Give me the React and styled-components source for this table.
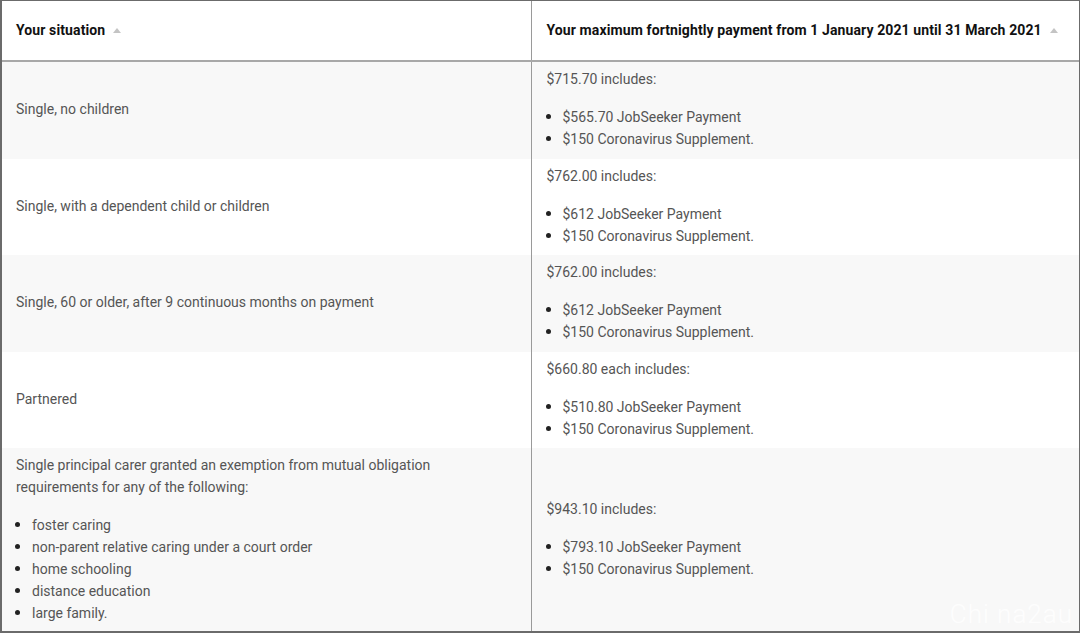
import React from 'react';
import styled, { createGlobalStyle } from 'styled-components';

const GlobalStyle = createGlobalStyle`
  html, body {
    margin: 0;
    padding: 0;
    background: #fff;
  }
  body {
    font-family: Roboto, "Liberation Sans", Arial, sans-serif;
    -webkit-font-smoothing: antialiased;
  }
`;

const rows = [
  {
    situation: 'Single, no children',
    total: '$715.70 includes:',
    items: ['$565.70 JobSeeker Payment', '$150 Coronavirus Supplement.'],
  },
  {
    situation: 'Single, with a dependent child or children',
    total: '$762.00 includes:',
    items: ['$612 JobSeeker Payment', '$150 Coronavirus Supplement.'],
  },
  {
    situation: 'Single, 60 or older, after 9 continuous months on payment',
    total: '$762.00 includes:',
    items: ['$612 JobSeeker Payment', '$150 Coronavirus Supplement.'],
  },
  {
    situation: 'Partnered',
    total: '$660.80 each includes:',
    items: ['$510.80 JobSeeker Payment', '$150 Coronavirus Supplement.'],
  },
  {
    situation:
      'Single principal carer granted an exemption from mutual obligation requirements for any of the following:',
    reasons: [
      'foster caring',
      'non-parent relative caring under a court order',
      'home schooling',
      'distance education',
      'large family.',
    ],
    total: '$943.10 includes:',
    items: ['$793.10 JobSeeker Payment', '$150 Coronavirus Supplement.'],
  },
];

export default function App() {
  return (
    <>
      <GlobalStyle />
      <Frame>
        <Table>
          <colgroup>
            <col style={{ width: 529 }} />
            <col />
          </colgroup>
          <thead>
            <tr>
              <HeadCell>
                Your situation
                <SortArrow />
              </HeadCell>
              <HeadCell>
                Your maximum fortnightly payment from 1 January 2021 until 31 March 2021
                <SortArrow />
              </HeadCell>
            </tr>
          </thead>
          <tbody>
            {rows.map((row, i) => (
              <Row key={i} striped={i % 2 === 0}>
                <Cell>
                  {row.reasons ? (
                    <>
                      <Para $wrap>{row.situation}</Para>
                      <List>
                        {row.reasons.map((r) => (
                          <li key={r}>{r}</li>
                        ))}
                      </List>
                    </>
                  ) : (
                    row.situation
                  )}
                </Cell>
                <Cell>
                  <Para>{row.total}</Para>
                  <List>
                    {row.items.map((it) => (
                      <li key={it}>{it}</li>
                    ))}
                  </List>
                </Cell>
              </Row>
            ))}
          </tbody>
        </Table>
        <Watermark>Chi na2au</Watermark>
      </Frame>
    </>
  );
}

const Frame = styled.div`
  position: relative;
  width: 1080px;
  height: 633px;
  box-sizing: border-box;
  border: 1px solid #6b6b6b;
  border-left-width: 2px;
  border-bottom-width: 2px;
  overflow: hidden;
`;

const Table = styled.table`
  width: 100%;
  border-collapse: collapse;
  table-layout: fixed;
  font-size: 14px;
  line-height: 22px;
  color: #555;
`;

const HeadCell = styled.th`
  height: 58px;
  padding: 0 15px 1px 14px;
  text-align: left;
  font-weight: 700;
  letter-spacing: 0.11px;
  color: #111;
  border-bottom: 2px solid #a8a8a8;
  vertical-align: middle;
  white-space: nowrap;

  & + & {
    border-left: 1px solid #9a9a9a;
    padding-left: 15px;
  }
`;

const SortArrow = styled.span`
  display: inline-block;
  margin-left: 8px;
  width: 0;
  height: 0;
  border-left: 4.5px solid transparent;
  border-right: 4.5px solid transparent;
  border-bottom: 5px solid #c4c4c4;
  vertical-align: 2px;
`;

const Row = styled.tr.withConfig({ shouldForwardProp: (p) => p !== 'striped' })`
  background: ${({ striped }) => (striped ? '#f8f8f8' : '#fff')};
`;

const Cell = styled.td`
  height: 82.5px;
  padding: 6px 16px 8px 14px;
  vertical-align: middle;
  font-weight: 400;

  & + & {
    border-left: 1px solid #9a9a9a;
    padding-left: 15px;
  }
`;

const Para = styled.p`
  margin: 0;
  max-width: ${({ $wrap }) => ($wrap ? '420px' : 'none')};
`;

const List = styled.ul`
  margin: 16px 0 0;
  padding-left: 16px;

  li::marker {
    font-size: 16px;
    color: #222;
  }
`;

const Watermark = styled.div`
  position: absolute;
  right: 6px;
  bottom: 2px;
  font-size: 26px;
  font-weight: 300;
  color: rgba(255, 255, 255, 0.85);
  letter-spacing: 1px;
  pointer-events: none;
`;
